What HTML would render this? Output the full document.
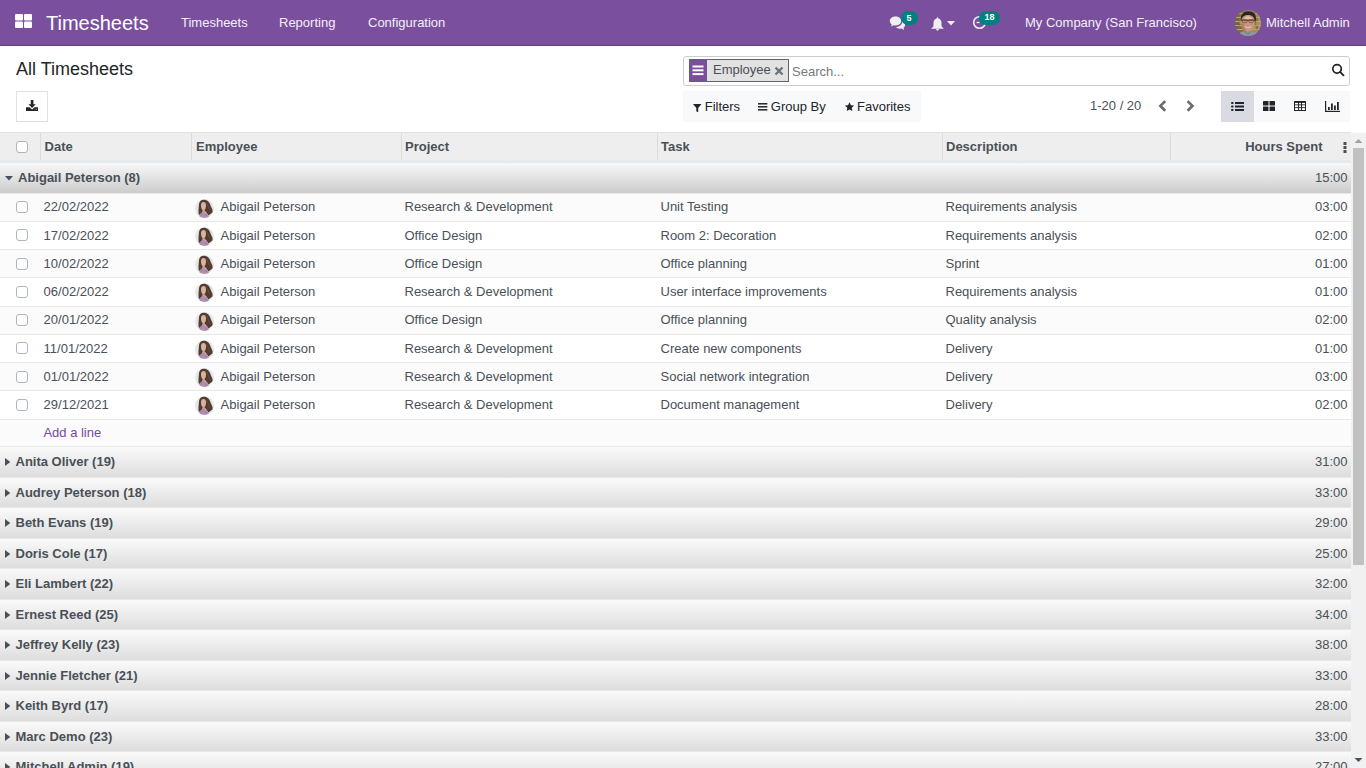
<!DOCTYPE html>
<html><head><meta charset="utf-8">
<style>
*{box-sizing:border-box;margin:0;padding:0}
html,body{width:1366px;height:768px;overflow:hidden;background:#fff}
body{font-family:"Liberation Sans",sans-serif;font-size:13px;color:#495057;position:relative}
.a{position:absolute;white-space:nowrap}
.nav{position:absolute;left:0;top:0;width:1366px;height:46px;background:#7a4f9d;border-bottom:1px solid #62417f}
.nav .a{color:#fff}
.nt{color:#f4f0f8 !important}
.badge{position:absolute;background:#01807f;color:#fff;border-radius:7px;font-size:9px;font-weight:bold;line-height:12.6px;height:14px;text-align:center}
.hdr{position:absolute;left:0;top:132px;width:1351px;height:30px;background:#eeeeee;border-top:1px solid #dee2e6;border-bottom:2px solid #e6e9ed}
.sep{position:absolute;top:0;width:1px;height:27px;background:#dcdcdc}
.b{font-weight:bold}
.grp{position:absolute;left:0;width:1351px;background-image:linear-gradient(#fafafa,#dddddd)}
.grp.open{background-image:linear-gradient(#f8f8f8,#cccccc)}
.bl{position:absolute;left:0;width:1351px;height:1px;background:#e6e9ec}
.rw{position:absolute;left:0;width:1351px;background:#fff}
.rw.odd{background:#fbfbfb}
.cb{position:absolute;width:12px;height:12px;border:1px solid #adb5bd;border-radius:3px;background:#fff}
.sb{position:absolute;left:1351px;top:133px;width:15px;height:635px;background:#f1f1f1}
</style></head>
<body>

<div class="nav">
<svg class="a" style="left:15px;top:14px" width="17" height="14" viewBox="0 0 17 14"><rect x="0" y="0" width="8" height="6.5" rx="1" fill="#fff"/><rect x="9" y="0" width="8" height="6.5" rx="1" fill="#fff"/><rect x="0" y="7.5" width="8" height="6.5" rx="1" fill="#fff"/><rect x="9" y="7.5" width="8" height="6.5" rx="1" fill="#fff"/></svg>
<div class="a " style="left:46px;top:13px;font-size:20px;line-height:20px;">Timesheets</div>
<div class="a nt" style="left:181px;top:16px;font-size:13px;line-height:13px;">Timesheets</div>
<div class="a nt" style="left:279px;top:16px;font-size:13px;line-height:13px;">Reporting</div>
<div class="a nt" style="left:368px;top:16px;font-size:13px;line-height:13px;">Configuration</div>
<svg class="a" style="left:889px;top:16px" width="17" height="14" viewBox="0 0 17 14"><path d="M6.5 0.6C3.2 0.6 0.8 2.5 0.8 5c0 1.3.7 2.5 1.9 3.3L2.1 10.6 4.6 9.2c.6.2 1.2.2 1.9.2 3.3 0 5.7-1.9 5.7-4.4S9.8.6 6.5.6z" fill="#f1edf5"/><path d="M13 5.2c.1.3.1.6.1.9 0 2.9-2.8 4.9-6.3 5 .9 1 2.5 1.7 4.3 1.7.5 0 1-.1 1.5-.2l2.6 1.3-.7-2.2c1-.7 1.6-1.7 1.6-2.8 0-1.5-1.2-2.9-3.1-3.7z" fill="#f1edf5"/></svg>
<div class="badge" style="left:901px;top:11px;width:17px;line-height:14px;padding-right:1px">5</div>
<svg class="a" style="left:931px;top:16.5px" width="13" height="14" viewBox="0 0 13 14"><path d="M6.5 0.3c-.5 0-.8.3-.8.8v.4C3.7 1.9 2.5 3.6 2.5 5.8v2.6c0 1-.9 2.1-2.2 2.9v.5h12.4v-.5c-1.3-.8-2.2-1.9-2.2-2.9V5.8c0-2.2-1.2-3.9-3.2-4.3v-.4c0-.5-.3-.8-.8-.8z" fill="#f1edf5"/><path d="M5 12.1c0 .9.7 1.5 1.5 1.5S8 13 8 12.1z" fill="#f1edf5"/></svg>
<svg class="a" style="left:947px;top:21px" width="8" height="5" viewBox="0 0 8 5"><path d="M0 0h8L4 4.5z" fill="#f1edf5"/></svg>
<svg class="a" style="left:972px;top:15px" width="15" height="15" viewBox="0 0 15 15"><circle cx="7.5" cy="7.5" r="5.8" fill="none" stroke="#f1edf5" stroke-width="1.6"/><path d="M7.5 7.5H4.5" stroke="#f1edf5" stroke-width="1.3"/></svg>
<div class="badge" style="left:979px;top:11px;width:21px">18</div>
<div class="a nt" style="left:1025px;top:16px;font-size:13px;line-height:13px;">My Company (San Francisco)</div>
<svg class="a" style="left:1235px;top:10px" width="26" height="26" viewBox="0 0 26 26"><defs><clipPath id="ua"><circle cx="13" cy="13" r="13"/></clipPath><filter id="fu" x="-10%" y="-10%" width="120%" height="120%"><feGaussianBlur stdDeviation="0.55"/></filter><linearGradient id="wall" x1="0" y1="0" x2="1" y2="0"><stop offset="0" stop-color="#6e5f38"/><stop offset=".5" stop-color="#9a8652"/><stop offset="1" stop-color="#a8935c"/></linearGradient></defs><g clip-path="url(#ua)"><rect width="26" height="26" fill="url(#wall)"/><g filter="url(#fu)"><path d="M0 3.5h26M0 7.5h26M0 11.5h26M0 15.5h26M0 19.5h26M0 23.5h26" stroke="#c2ad72" stroke-width=".9"/><path d="M4 0v3.5M12 3.5v4M20 0v3.5M8 7.5v4M22 7.5v4M4 11.5v4M20 11.5v4M8 15.5v4M22 15.5v4" stroke="#5e502c" stroke-width=".8"/><path d="M5.8 10C5.6 4.2 8.5 1.2 13.5 1.2S21.2 4 21 9.5L20 12.5 6.5 12.5z" fill="#2f2620"/><path d="M6.2 12C6.2 7.5 8.8 5 13 5S19.8 7.5 19.8 12C19.8 18 17 22 13 22S6.2 18 6.2 12z" fill="#c9957a"/><path d="M8.5 9.5C9.5 7 11.5 6.2 13.5 6.4S17 7.6 17.5 9.5" fill="#e2c0ac"/><path d="M6.2 12C6.2 17 8 21 11 21.8L9 14z" fill="#a9735b" opacity=".6"/><ellipse cx="5.6" cy="12.5" rx="1.2" ry="2" fill="#c48a6c"/><path d="M6 10.2h14.5" stroke="#333" stroke-width=".9"/><rect x="7.6" y="9.6" width="4.6" height="3" rx="1" fill="none" stroke="#3a3a3a" stroke-width=".5"/><rect x="13.8" y="9.6" width="4.6" height="3" rx="1" fill="none" stroke="#3a3a3a" stroke-width=".5"/><path d="M9.8 16.5q3.2 2.4 6.4 0" stroke="#e0c4b8" stroke-width="1.1" fill="none"/><path d="M2.5 27C3.2 22.8 6.5 21.2 12.8 21.2S22 22.8 23 27z" fill="#8d9a9e"/><path d="M10 21.5l2.8 3 2.8-3" stroke="#5d6a6e" stroke-width=".8" fill="none"/></g></g></svg>
<div class="a nt" style="left:1266px;top:16px;font-size:13px;line-height:13px;">Mitchell Admin</div>
</div>
<div class="a " style="left:16px;top:60px;font-size:18px;line-height:18px;color:#212529">All Timesheets</div>
<div class="a" style="left:16px;top:91px;width:32px;height:31px;border:1px solid #dee2e6;background:#fff"></div>
<svg class="a" style="left:26px;top:100px" width="12" height="12" viewBox="0 0 12 12"><path d="M4.8 0h2.6v4.3h2.3L6.1 8 2.5 4.3h2.3z" fill="#212529"/><path d="M0 7.2h3.7L6.1 9.4 8.5 7.2H12V11H0z" fill="#212529"/><rect x="8.6" y="8.8" width="1" height="1" fill="#6c8fb0"/><rect x="10" y="8.8" width="1" height="1" fill="#6c8fb0"/></svg>
<div class="a" style="left:683px;top:56px;width:667px;height:30px;border:1px solid #cdcdcd;border-radius:3px;background:#fff"></div>
<div class="a" style="left:689px;top:59px;width:100px;height:23px;border:1px solid #5e656b;background:#e2e2e2"></div>
<div class="a" style="left:690px;top:60px;width:17px;height:21px;background:#7a4f9d"></div>
<svg class="a" style="left:692px;top:65px" width="12" height="11" viewBox="0 0 12 11"><rect x="0.5" y="0.5" width="11" height="2" fill="#fff"/><rect x="0.5" y="4.3" width="11" height="2" fill="#fff"/><rect x="0.5" y="8.1" width="11" height="2" fill="#fff"/></svg>
<div class="a " style="left:713px;top:63px;font-size:13px;line-height:13px;color:#495057">Employee</div>
<svg class="a" style="left:774px;top:66px" width="10" height="10" viewBox="0 0 10 10"><path d="M1.5 1.5l7 7M8.5 1.5l-7 7" stroke="#6c757d" stroke-width="2.4" stroke-linecap="butt"/></svg>
<div class="a " style="left:792px;top:65px;font-size:13px;line-height:13px;color:#737a80">Search...</div>
<svg class="a" style="left:1331px;top:63px" width="14" height="14" viewBox="0 0 14 14"><circle cx="6.05" cy="5.8" r="4.25" fill="none" stroke="#212529" stroke-width="1.7"/><path d="M9.1 8.9l3.4 3.4" stroke="#212529" stroke-width="1.9" stroke-linecap="round"/></svg>
<div class="a" style="left:683px;top:91px;width:238px;height:31px;background:#f8f9fa"></div>
<svg class="a" style="left:693px;top:103.5px" width="8.5" height="8.5" viewBox="0 0 9 9"><path d="M0 0h9L5.5 4.2V9L3.5 7.6V4.2z" fill="#212529"/></svg>
<div class="a " style="left:704.7px;top:100px;font-size:13px;line-height:13px;color:#212529">Filters</div>
<svg class="a" style="left:758.3px;top:103.4px" width="9.4" height="7.6" viewBox="0 0 10 8"><rect y="0" width="10" height="1.6" fill="#212529"/><rect y="3.2" width="10" height="1.6" fill="#212529"/><rect y="6.4" width="10" height="1.6" fill="#212529"/></svg>
<div class="a " style="left:770.8px;top:100px;font-size:13px;line-height:13px;color:#212529">Group By</div>
<svg class="a" style="left:843.5px;top:102px" width="11" height="10" viewBox="-.5 0 11 10.4"><path d="M5 0.3l1.45 3.05 3.3.4-2.45 2.3.65 3.3L5 7.7 2.05 9.35l.65-3.3L.25 3.75l3.3-.4z" fill="#212529"/></svg>
<div class="a " style="left:857px;top:100px;font-size:13px;line-height:13px;color:#212529">Favorites</div>
<div class="a " style="left:1090px;top:99px;font-size:13px;line-height:13px;color:#495057">1-20 / 20</div>
<svg class="a" style="left:1158px;top:100px" width="9" height="12" viewBox="0 0 9 12"><path d="M7.2 1.1L2.4 5.9 7.2 10.7" stroke="#686c70" stroke-width="2.7" fill="none"/></svg>
<svg class="a" style="left:1186px;top:100px" width="9" height="12" viewBox="0 0 9 12"><path d="M1.6 1.1L6.4 5.9 1.6 10.7" stroke="#686c70" stroke-width="2.7" fill="none"/></svg>
<div class="a" style="left:1221px;top:91px;width:129px;height:31px;background:#f8f9fa"></div>
<div class="a" style="left:1221px;top:91px;width:33px;height:31px;background:#d8dce2"></div>
<svg class="a" style="left:1230px;top:101px" width="15" height="11" viewBox="0 0 15 11"><g fill="#212529"><rect x="1" y="1" width="2.6" height="2" rx="1"/><rect x="1" y="4.5" width="2.6" height="2" rx="1"/><rect x="1" y="8" width="2.6" height="2" rx="1"/><rect x="5" y="1" width="9" height="2"/><rect x="5" y="4.5" width="9" height="2"/><rect x="5" y="8" width="9" height="2"/></g></svg>
<svg class="a" style="left:1263px;top:101px" width="12" height="10" viewBox="0 0 12 10"><g fill="#212529"><rect x="0" y="0" width="5.5" height="4.5" rx=".6"/><rect x="6.5" y="0" width="5.5" height="4.5" rx=".6"/><rect x="0" y="5.5" width="5.5" height="4.5" rx=".6"/><rect x="6.5" y="5.5" width="5.5" height="4.5" rx=".6"/></g></svg>
<svg class="a" style="left:1294px;top:101px" width="12" height="10" viewBox="0 0 12 10"><rect width="12" height="10" rx=".5" fill="#212529"/><g fill="#fff"><rect x="1" y="1.9" width="3.1" height="1.5"/><rect x="5.1" y="1.9" width="1.9" height="1.5"/><rect x="8" y="1.9" width="3" height="1.5"/><rect x="1" y="4.3" width="3.1" height="1.9"/><rect x="5.1" y="4.3" width="1.9" height="1.9"/><rect x="8" y="4.3" width="3" height="1.9"/><rect x="1" y="7.1" width="3.1" height="1.9"/><rect x="5.1" y="7.1" width="1.9" height="1.9"/><rect x="8" y="7.1" width="3" height="1.9"/></g></svg>
<svg class="a" style="left:1325px;top:101px" width="15" height="11" viewBox="0 0 15 11"><g fill="#212529"><rect x="0" y="0" width="1.2" height="11"/><rect x="0" y="9.8" width="15" height="1.2"/><rect x="3" y="6" width="1.8" height="3"/><rect x="6" y="2.5" width="1.8" height="6.5"/><rect x="9" y="4.5" width="1.8" height="4.5"/><rect x="12" y="1" width="1.8" height="8"/></g></svg>
<div class="hdr">
<div class="cb" style="left:16px;top:8px"></div>
<div class="sep" style="left:40px"></div>
<div class="sep" style="left:191px"></div>
<div class="sep" style="left:401px"></div>
<div class="sep" style="left:657px"></div>
<div class="sep" style="left:942px"></div>
<div class="sep" style="left:1170px"></div>
</div>
<div class="a " style="left:44.6px;top:140px;font-size:13px;line-height:13px;font-weight:bold">Date</div>
<div class="a " style="left:196px;top:140px;font-size:13px;line-height:13px;font-weight:bold">Employee</div>
<div class="a " style="left:405px;top:140px;font-size:13px;line-height:13px;font-weight:bold">Project</div>
<div class="a " style="left:661px;top:140px;font-size:13px;line-height:13px;font-weight:bold">Task</div>
<div class="a " style="left:946px;top:140px;font-size:13px;line-height:13px;font-weight:bold">Description</div>
<div class="a" style="right:43.5px;top:140px;font-size:13px;line-height:13px;font-weight:bold">Hours Spent</div>
<svg class="a" style="left:1342.5px;top:141.5px" width="4" height="11" viewBox="0 0 4 11"><g fill="#495057"><rect x=".5" y="0" width="3" height="3"/><rect x=".5" y="4" width="3" height="3"/><rect x=".5" y="8" width="3" height="3"/></g></svg>
<div class="bl" style="top:162px"></div>
<div class="grp open" style="top:163px;height:30px"></div>
<svg class="a" style="left:5px;top:175.5px" width="8" height="5" viewBox="0 0 8 5"><path d="M0 0h8L4 4.6z" fill="#495057"/></svg>
<div class="a " style="left:18px;top:171px;font-size:13px;line-height:13px;font-weight:bold">Abigail Peterson (8)</div>
<div class="a" style="right:18.5px;top:171px;font-size:13px;line-height:13px;">15:00</div>
<div class="bl" style="top:193px"></div>
<div class="rw odd" style="top:194px;height:27px"></div>
<div class="cb" style="left:16px;top:201px"></div>
<div class="a " style="left:43.6px;top:200px;font-size:13px;line-height:13px;">22/02/2022</div>
<div class="a" style="left:195px;top:199px"><svg width="19" height="19" viewBox="0 0 19 19"><defs><clipPath id="cw0"><circle cx="9.5" cy="9.5" r="9.5"/></clipPath><filter id="fw0" x="-10%" y="-10%" width="120%" height="120%"><feGaussianBlur stdDeviation="0.45"/></filter></defs><g clip-path="url(#cw0)"><rect width="19" height="19" fill="#e4e8eb"/><g filter="url(#fw0)"><path d="M8.8 0.8C5.6 0.8 4.2 3 3.9 6.2 3.6 9.6 3.2 12.5 3.8 15.5L7 16.5 7.4 12.4 10.6 12.5 13.5 16.6 17.4 13.4C18.2 11.5 17 9.6 15.8 7.2 14.7 3.3 12.6 0.8 8.8 0.8z" fill="#523a2f"/><path d="M11 3.5C12.5 5 13.2 8 14.8 11.5" stroke="#6e5244" stroke-width=".8" fill="none"/><path d="M6 6.2C6 4 7 3 8.5 3S11 4.2 11 6.4C11 9.2 10 11.2 8.5 11.2S6 9.2 6 6.2z" fill="#d9b3a2"/><path d="M7.5 11h2.2v2.5H7.5z" fill="#cfa592"/><path d="M4 19.5C4.4 15.6 5.6 13.2 8.6 13S13.4 15 14.2 19.5z" fill="#b48ca8"/><circle cx="6.6" cy="15.6" r=".8" fill="#8d8cc0"/><circle cx="11.1" cy="16.4" r=".9" fill="#8189c4"/><circle cx="8.8" cy="17.6" r=".7" fill="#d58ea0"/></g></g></svg></div>
<div class="a " style="left:220.6px;top:200px;font-size:13px;line-height:13px;">Abigail Peterson</div>
<div class="a " style="left:404.5px;top:200px;font-size:13px;line-height:13px;">Research &amp; Development</div>
<div class="a " style="left:660.5px;top:200px;font-size:13px;line-height:13px;">Unit Testing</div>
<div class="a " style="left:945.5px;top:200px;font-size:13px;line-height:13px;">Requirements analysis</div>
<div class="a" style="right:18.5px;top:200px;font-size:13px;line-height:13px;">03:00</div>
<div class="bl" style="top:221px"></div>
<div class="rw" style="top:222px;height:27px"></div>
<div class="cb" style="left:16px;top:229px"></div>
<div class="a " style="left:43.6px;top:229px;font-size:13px;line-height:13px;">17/02/2022</div>
<div class="a" style="left:195px;top:227px"><svg width="19" height="19" viewBox="0 0 19 19"><defs><clipPath id="cw1"><circle cx="9.5" cy="9.5" r="9.5"/></clipPath><filter id="fw1" x="-10%" y="-10%" width="120%" height="120%"><feGaussianBlur stdDeviation="0.45"/></filter></defs><g clip-path="url(#cw1)"><rect width="19" height="19" fill="#e4e8eb"/><g filter="url(#fw1)"><path d="M8.8 0.8C5.6 0.8 4.2 3 3.9 6.2 3.6 9.6 3.2 12.5 3.8 15.5L7 16.5 7.4 12.4 10.6 12.5 13.5 16.6 17.4 13.4C18.2 11.5 17 9.6 15.8 7.2 14.7 3.3 12.6 0.8 8.8 0.8z" fill="#523a2f"/><path d="M11 3.5C12.5 5 13.2 8 14.8 11.5" stroke="#6e5244" stroke-width=".8" fill="none"/><path d="M6 6.2C6 4 7 3 8.5 3S11 4.2 11 6.4C11 9.2 10 11.2 8.5 11.2S6 9.2 6 6.2z" fill="#d9b3a2"/><path d="M7.5 11h2.2v2.5H7.5z" fill="#cfa592"/><path d="M4 19.5C4.4 15.6 5.6 13.2 8.6 13S13.4 15 14.2 19.5z" fill="#b48ca8"/><circle cx="6.6" cy="15.6" r=".8" fill="#8d8cc0"/><circle cx="11.1" cy="16.4" r=".9" fill="#8189c4"/><circle cx="8.8" cy="17.6" r=".7" fill="#d58ea0"/></g></g></svg></div>
<div class="a " style="left:220.6px;top:229px;font-size:13px;line-height:13px;">Abigail Peterson</div>
<div class="a " style="left:404.5px;top:229px;font-size:13px;line-height:13px;">Office Design</div>
<div class="a " style="left:660.5px;top:229px;font-size:13px;line-height:13px;">Room 2: Decoration</div>
<div class="a " style="left:945.5px;top:229px;font-size:13px;line-height:13px;">Requirements analysis</div>
<div class="a" style="right:18.5px;top:229px;font-size:13px;line-height:13px;">02:00</div>
<div class="bl" style="top:249px"></div>
<div class="rw odd" style="top:250px;height:27px"></div>
<div class="cb" style="left:16px;top:258px"></div>
<div class="a " style="left:43.6px;top:257px;font-size:13px;line-height:13px;">10/02/2022</div>
<div class="a" style="left:195px;top:255px"><svg width="19" height="19" viewBox="0 0 19 19"><defs><clipPath id="cw2"><circle cx="9.5" cy="9.5" r="9.5"/></clipPath><filter id="fw2" x="-10%" y="-10%" width="120%" height="120%"><feGaussianBlur stdDeviation="0.45"/></filter></defs><g clip-path="url(#cw2)"><rect width="19" height="19" fill="#e4e8eb"/><g filter="url(#fw2)"><path d="M8.8 0.8C5.6 0.8 4.2 3 3.9 6.2 3.6 9.6 3.2 12.5 3.8 15.5L7 16.5 7.4 12.4 10.6 12.5 13.5 16.6 17.4 13.4C18.2 11.5 17 9.6 15.8 7.2 14.7 3.3 12.6 0.8 8.8 0.8z" fill="#523a2f"/><path d="M11 3.5C12.5 5 13.2 8 14.8 11.5" stroke="#6e5244" stroke-width=".8" fill="none"/><path d="M6 6.2C6 4 7 3 8.5 3S11 4.2 11 6.4C11 9.2 10 11.2 8.5 11.2S6 9.2 6 6.2z" fill="#d9b3a2"/><path d="M7.5 11h2.2v2.5H7.5z" fill="#cfa592"/><path d="M4 19.5C4.4 15.6 5.6 13.2 8.6 13S13.4 15 14.2 19.5z" fill="#b48ca8"/><circle cx="6.6" cy="15.6" r=".8" fill="#8d8cc0"/><circle cx="11.1" cy="16.4" r=".9" fill="#8189c4"/><circle cx="8.8" cy="17.6" r=".7" fill="#d58ea0"/></g></g></svg></div>
<div class="a " style="left:220.6px;top:257px;font-size:13px;line-height:13px;">Abigail Peterson</div>
<div class="a " style="left:404.5px;top:257px;font-size:13px;line-height:13px;">Office Design</div>
<div class="a " style="left:660.5px;top:257px;font-size:13px;line-height:13px;">Office planning</div>
<div class="a " style="left:945.5px;top:257px;font-size:13px;line-height:13px;">Sprint</div>
<div class="a" style="right:18.5px;top:257px;font-size:13px;line-height:13px;">01:00</div>
<div class="bl" style="top:277px"></div>
<div class="rw" style="top:278px;height:28px"></div>
<div class="cb" style="left:16px;top:286px"></div>
<div class="a " style="left:43.6px;top:285px;font-size:13px;line-height:13px;">06/02/2022</div>
<div class="a" style="left:195px;top:283px"><svg width="19" height="19" viewBox="0 0 19 19"><defs><clipPath id="cw3"><circle cx="9.5" cy="9.5" r="9.5"/></clipPath><filter id="fw3" x="-10%" y="-10%" width="120%" height="120%"><feGaussianBlur stdDeviation="0.45"/></filter></defs><g clip-path="url(#cw3)"><rect width="19" height="19" fill="#e4e8eb"/><g filter="url(#fw3)"><path d="M8.8 0.8C5.6 0.8 4.2 3 3.9 6.2 3.6 9.6 3.2 12.5 3.8 15.5L7 16.5 7.4 12.4 10.6 12.5 13.5 16.6 17.4 13.4C18.2 11.5 17 9.6 15.8 7.2 14.7 3.3 12.6 0.8 8.8 0.8z" fill="#523a2f"/><path d="M11 3.5C12.5 5 13.2 8 14.8 11.5" stroke="#6e5244" stroke-width=".8" fill="none"/><path d="M6 6.2C6 4 7 3 8.5 3S11 4.2 11 6.4C11 9.2 10 11.2 8.5 11.2S6 9.2 6 6.2z" fill="#d9b3a2"/><path d="M7.5 11h2.2v2.5H7.5z" fill="#cfa592"/><path d="M4 19.5C4.4 15.6 5.6 13.2 8.6 13S13.4 15 14.2 19.5z" fill="#b48ca8"/><circle cx="6.6" cy="15.6" r=".8" fill="#8d8cc0"/><circle cx="11.1" cy="16.4" r=".9" fill="#8189c4"/><circle cx="8.8" cy="17.6" r=".7" fill="#d58ea0"/></g></g></svg></div>
<div class="a " style="left:220.6px;top:285px;font-size:13px;line-height:13px;">Abigail Peterson</div>
<div class="a " style="left:404.5px;top:285px;font-size:13px;line-height:13px;">Research &amp; Development</div>
<div class="a " style="left:660.5px;top:285px;font-size:13px;line-height:13px;">User interface improvements</div>
<div class="a " style="left:945.5px;top:285px;font-size:13px;line-height:13px;">Requirements analysis</div>
<div class="a" style="right:18.5px;top:285px;font-size:13px;line-height:13px;">01:00</div>
<div class="bl" style="top:306px"></div>
<div class="rw odd" style="top:307px;height:27px"></div>
<div class="cb" style="left:16px;top:314px"></div>
<div class="a " style="left:43.6px;top:313px;font-size:13px;line-height:13px;">20/01/2022</div>
<div class="a" style="left:195px;top:312px"><svg width="19" height="19" viewBox="0 0 19 19"><defs><clipPath id="cw4"><circle cx="9.5" cy="9.5" r="9.5"/></clipPath><filter id="fw4" x="-10%" y="-10%" width="120%" height="120%"><feGaussianBlur stdDeviation="0.45"/></filter></defs><g clip-path="url(#cw4)"><rect width="19" height="19" fill="#e4e8eb"/><g filter="url(#fw4)"><path d="M8.8 0.8C5.6 0.8 4.2 3 3.9 6.2 3.6 9.6 3.2 12.5 3.8 15.5L7 16.5 7.4 12.4 10.6 12.5 13.5 16.6 17.4 13.4C18.2 11.5 17 9.6 15.8 7.2 14.7 3.3 12.6 0.8 8.8 0.8z" fill="#523a2f"/><path d="M11 3.5C12.5 5 13.2 8 14.8 11.5" stroke="#6e5244" stroke-width=".8" fill="none"/><path d="M6 6.2C6 4 7 3 8.5 3S11 4.2 11 6.4C11 9.2 10 11.2 8.5 11.2S6 9.2 6 6.2z" fill="#d9b3a2"/><path d="M7.5 11h2.2v2.5H7.5z" fill="#cfa592"/><path d="M4 19.5C4.4 15.6 5.6 13.2 8.6 13S13.4 15 14.2 19.5z" fill="#b48ca8"/><circle cx="6.6" cy="15.6" r=".8" fill="#8d8cc0"/><circle cx="11.1" cy="16.4" r=".9" fill="#8189c4"/><circle cx="8.8" cy="17.6" r=".7" fill="#d58ea0"/></g></g></svg></div>
<div class="a " style="left:220.6px;top:313px;font-size:13px;line-height:13px;">Abigail Peterson</div>
<div class="a " style="left:404.5px;top:313px;font-size:13px;line-height:13px;">Office Design</div>
<div class="a " style="left:660.5px;top:313px;font-size:13px;line-height:13px;">Office planning</div>
<div class="a " style="left:945.5px;top:313px;font-size:13px;line-height:13px;">Quality analysis</div>
<div class="a" style="right:18.5px;top:313px;font-size:13px;line-height:13px;">02:00</div>
<div class="bl" style="top:334px"></div>
<div class="rw" style="top:335px;height:27px"></div>
<div class="cb" style="left:16px;top:342px"></div>
<div class="a " style="left:43.6px;top:342px;font-size:13px;line-height:13px;">11/01/2022</div>
<div class="a" style="left:195px;top:340px"><svg width="19" height="19" viewBox="0 0 19 19"><defs><clipPath id="cw5"><circle cx="9.5" cy="9.5" r="9.5"/></clipPath><filter id="fw5" x="-10%" y="-10%" width="120%" height="120%"><feGaussianBlur stdDeviation="0.45"/></filter></defs><g clip-path="url(#cw5)"><rect width="19" height="19" fill="#e4e8eb"/><g filter="url(#fw5)"><path d="M8.8 0.8C5.6 0.8 4.2 3 3.9 6.2 3.6 9.6 3.2 12.5 3.8 15.5L7 16.5 7.4 12.4 10.6 12.5 13.5 16.6 17.4 13.4C18.2 11.5 17 9.6 15.8 7.2 14.7 3.3 12.6 0.8 8.8 0.8z" fill="#523a2f"/><path d="M11 3.5C12.5 5 13.2 8 14.8 11.5" stroke="#6e5244" stroke-width=".8" fill="none"/><path d="M6 6.2C6 4 7 3 8.5 3S11 4.2 11 6.4C11 9.2 10 11.2 8.5 11.2S6 9.2 6 6.2z" fill="#d9b3a2"/><path d="M7.5 11h2.2v2.5H7.5z" fill="#cfa592"/><path d="M4 19.5C4.4 15.6 5.6 13.2 8.6 13S13.4 15 14.2 19.5z" fill="#b48ca8"/><circle cx="6.6" cy="15.6" r=".8" fill="#8d8cc0"/><circle cx="11.1" cy="16.4" r=".9" fill="#8189c4"/><circle cx="8.8" cy="17.6" r=".7" fill="#d58ea0"/></g></g></svg></div>
<div class="a " style="left:220.6px;top:342px;font-size:13px;line-height:13px;">Abigail Peterson</div>
<div class="a " style="left:404.5px;top:342px;font-size:13px;line-height:13px;">Research &amp; Development</div>
<div class="a " style="left:660.5px;top:342px;font-size:13px;line-height:13px;">Create new components</div>
<div class="a " style="left:945.5px;top:342px;font-size:13px;line-height:13px;">Delivery</div>
<div class="a" style="right:18.5px;top:342px;font-size:13px;line-height:13px;">01:00</div>
<div class="bl" style="top:362px"></div>
<div class="rw odd" style="top:363px;height:27px"></div>
<div class="cb" style="left:16px;top:371px"></div>
<div class="a " style="left:43.6px;top:370px;font-size:13px;line-height:13px;">01/01/2022</div>
<div class="a" style="left:195px;top:368px"><svg width="19" height="19" viewBox="0 0 19 19"><defs><clipPath id="cw6"><circle cx="9.5" cy="9.5" r="9.5"/></clipPath><filter id="fw6" x="-10%" y="-10%" width="120%" height="120%"><feGaussianBlur stdDeviation="0.45"/></filter></defs><g clip-path="url(#cw6)"><rect width="19" height="19" fill="#e4e8eb"/><g filter="url(#fw6)"><path d="M8.8 0.8C5.6 0.8 4.2 3 3.9 6.2 3.6 9.6 3.2 12.5 3.8 15.5L7 16.5 7.4 12.4 10.6 12.5 13.5 16.6 17.4 13.4C18.2 11.5 17 9.6 15.8 7.2 14.7 3.3 12.6 0.8 8.8 0.8z" fill="#523a2f"/><path d="M11 3.5C12.5 5 13.2 8 14.8 11.5" stroke="#6e5244" stroke-width=".8" fill="none"/><path d="M6 6.2C6 4 7 3 8.5 3S11 4.2 11 6.4C11 9.2 10 11.2 8.5 11.2S6 9.2 6 6.2z" fill="#d9b3a2"/><path d="M7.5 11h2.2v2.5H7.5z" fill="#cfa592"/><path d="M4 19.5C4.4 15.6 5.6 13.2 8.6 13S13.4 15 14.2 19.5z" fill="#b48ca8"/><circle cx="6.6" cy="15.6" r=".8" fill="#8d8cc0"/><circle cx="11.1" cy="16.4" r=".9" fill="#8189c4"/><circle cx="8.8" cy="17.6" r=".7" fill="#d58ea0"/></g></g></svg></div>
<div class="a " style="left:220.6px;top:370px;font-size:13px;line-height:13px;">Abigail Peterson</div>
<div class="a " style="left:404.5px;top:370px;font-size:13px;line-height:13px;">Research &amp; Development</div>
<div class="a " style="left:660.5px;top:370px;font-size:13px;line-height:13px;">Social network integration</div>
<div class="a " style="left:945.5px;top:370px;font-size:13px;line-height:13px;">Delivery</div>
<div class="a" style="right:18.5px;top:370px;font-size:13px;line-height:13px;">03:00</div>
<div class="bl" style="top:390px"></div>
<div class="rw" style="top:391px;height:28px"></div>
<div class="cb" style="left:16px;top:399px"></div>
<div class="a " style="left:43.6px;top:398px;font-size:13px;line-height:13px;">29/12/2021</div>
<div class="a" style="left:195px;top:396px"><svg width="19" height="19" viewBox="0 0 19 19"><defs><clipPath id="cw7"><circle cx="9.5" cy="9.5" r="9.5"/></clipPath><filter id="fw7" x="-10%" y="-10%" width="120%" height="120%"><feGaussianBlur stdDeviation="0.45"/></filter></defs><g clip-path="url(#cw7)"><rect width="19" height="19" fill="#e4e8eb"/><g filter="url(#fw7)"><path d="M8.8 0.8C5.6 0.8 4.2 3 3.9 6.2 3.6 9.6 3.2 12.5 3.8 15.5L7 16.5 7.4 12.4 10.6 12.5 13.5 16.6 17.4 13.4C18.2 11.5 17 9.6 15.8 7.2 14.7 3.3 12.6 0.8 8.8 0.8z" fill="#523a2f"/><path d="M11 3.5C12.5 5 13.2 8 14.8 11.5" stroke="#6e5244" stroke-width=".8" fill="none"/><path d="M6 6.2C6 4 7 3 8.5 3S11 4.2 11 6.4C11 9.2 10 11.2 8.5 11.2S6 9.2 6 6.2z" fill="#d9b3a2"/><path d="M7.5 11h2.2v2.5H7.5z" fill="#cfa592"/><path d="M4 19.5C4.4 15.6 5.6 13.2 8.6 13S13.4 15 14.2 19.5z" fill="#b48ca8"/><circle cx="6.6" cy="15.6" r=".8" fill="#8d8cc0"/><circle cx="11.1" cy="16.4" r=".9" fill="#8189c4"/><circle cx="8.8" cy="17.6" r=".7" fill="#d58ea0"/></g></g></svg></div>
<div class="a " style="left:220.6px;top:398px;font-size:13px;line-height:13px;">Abigail Peterson</div>
<div class="a " style="left:404.5px;top:398px;font-size:13px;line-height:13px;">Research &amp; Development</div>
<div class="a " style="left:660.5px;top:398px;font-size:13px;line-height:13px;">Document management</div>
<div class="a " style="left:945.5px;top:398px;font-size:13px;line-height:13px;">Delivery</div>
<div class="a" style="right:18.5px;top:398px;font-size:13px;line-height:13px;">02:00</div>
<div class="bl" style="top:419px"></div>
<div class="rw odd" style="top:420px;height:26px"></div>
<div class="a " style="left:43.4px;top:426px;font-size:13px;line-height:13px;color:#7649a0">Add a line</div>
<div class="bl" style="top:446px"></div>
<div class="grp" style="top:447px;height:30px"></div>
<svg class="a" style="left:5px;top:457.5px" width="6" height="8" viewBox="0 0 6 8"><path d="M0 0v8L5.3 4z" fill="#495057"/></svg>
<div class="a " style="left:15.5px;top:455px;font-size:13px;line-height:13px;font-weight:bold">Anita Oliver (19)</div>
<div class="a" style="right:18.5px;top:455px;font-size:13px;line-height:13px;">31:00</div>
<div class="bl" style="top:477px"></div>
<div class="grp" style="top:478px;height:29px"></div>
<svg class="a" style="left:5px;top:488.5px" width="6" height="8" viewBox="0 0 6 8"><path d="M0 0v8L5.3 4z" fill="#495057"/></svg>
<div class="a " style="left:15.5px;top:486px;font-size:13px;line-height:13px;font-weight:bold">Audrey Peterson (18)</div>
<div class="a" style="right:18.5px;top:486px;font-size:13px;line-height:13px;">33:00</div>
<div class="bl" style="top:507px"></div>
<div class="grp" style="top:508px;height:30px"></div>
<svg class="a" style="left:5px;top:518.5px" width="6" height="8" viewBox="0 0 6 8"><path d="M0 0v8L5.3 4z" fill="#495057"/></svg>
<div class="a " style="left:15.5px;top:516px;font-size:13px;line-height:13px;font-weight:bold">Beth Evans (19)</div>
<div class="a" style="right:18.5px;top:516px;font-size:13px;line-height:13px;">29:00</div>
<div class="bl" style="top:538px"></div>
<div class="grp" style="top:539px;height:29px"></div>
<svg class="a" style="left:5px;top:549.5px" width="6" height="8" viewBox="0 0 6 8"><path d="M0 0v8L5.3 4z" fill="#495057"/></svg>
<div class="a " style="left:15.5px;top:547px;font-size:13px;line-height:13px;font-weight:bold">Doris Cole (17)</div>
<div class="a" style="right:18.5px;top:547px;font-size:13px;line-height:13px;">25:00</div>
<div class="bl" style="top:568px"></div>
<div class="grp" style="top:569px;height:30px"></div>
<svg class="a" style="left:5px;top:579.5px" width="6" height="8" viewBox="0 0 6 8"><path d="M0 0v8L5.3 4z" fill="#495057"/></svg>
<div class="a " style="left:15.5px;top:577px;font-size:13px;line-height:13px;font-weight:bold">Eli Lambert (22)</div>
<div class="a" style="right:18.5px;top:577px;font-size:13px;line-height:13px;">32:00</div>
<div class="bl" style="top:599px"></div>
<div class="grp" style="top:600px;height:29px"></div>
<svg class="a" style="left:5px;top:610.5px" width="6" height="8" viewBox="0 0 6 8"><path d="M0 0v8L5.3 4z" fill="#495057"/></svg>
<div class="a " style="left:15.5px;top:608px;font-size:13px;line-height:13px;font-weight:bold">Ernest Reed (25)</div>
<div class="a" style="right:18.5px;top:608px;font-size:13px;line-height:13px;">34:00</div>
<div class="bl" style="top:629px"></div>
<div class="grp" style="top:630px;height:30px"></div>
<svg class="a" style="left:5px;top:640.5px" width="6" height="8" viewBox="0 0 6 8"><path d="M0 0v8L5.3 4z" fill="#495057"/></svg>
<div class="a " style="left:15.5px;top:638px;font-size:13px;line-height:13px;font-weight:bold">Jeffrey Kelly (23)</div>
<div class="a" style="right:18.5px;top:638px;font-size:13px;line-height:13px;">38:00</div>
<div class="bl" style="top:660px"></div>
<div class="grp" style="top:661px;height:29px"></div>
<svg class="a" style="left:5px;top:671.5px" width="6" height="8" viewBox="0 0 6 8"><path d="M0 0v8L5.3 4z" fill="#495057"/></svg>
<div class="a " style="left:15.5px;top:669px;font-size:13px;line-height:13px;font-weight:bold">Jennie Fletcher (21)</div>
<div class="a" style="right:18.5px;top:669px;font-size:13px;line-height:13px;">33:00</div>
<div class="bl" style="top:690px"></div>
<div class="grp" style="top:691px;height:30px"></div>
<svg class="a" style="left:5px;top:701.5px" width="6" height="8" viewBox="0 0 6 8"><path d="M0 0v8L5.3 4z" fill="#495057"/></svg>
<div class="a " style="left:15.5px;top:699px;font-size:13px;line-height:13px;font-weight:bold">Keith Byrd (17)</div>
<div class="a" style="right:18.5px;top:699px;font-size:13px;line-height:13px;">28:00</div>
<div class="bl" style="top:721px"></div>
<div class="grp" style="top:722px;height:29px"></div>
<svg class="a" style="left:5px;top:732.5px" width="6" height="8" viewBox="0 0 6 8"><path d="M0 0v8L5.3 4z" fill="#495057"/></svg>
<div class="a " style="left:15.5px;top:730px;font-size:13px;line-height:13px;font-weight:bold">Marc Demo (23)</div>
<div class="a" style="right:18.5px;top:730px;font-size:13px;line-height:13px;">33:00</div>
<div class="bl" style="top:751px"></div>
<div class="grp" style="top:752px;height:30px"></div>
<svg class="a" style="left:5px;top:762.5px" width="6" height="8" viewBox="0 0 6 8"><path d="M0 0v8L5.3 4z" fill="#495057"/></svg>
<div class="a " style="left:15.5px;top:760px;font-size:13px;line-height:13px;font-weight:bold">Mitchell Admin (19)</div>
<div class="a" style="right:18.5px;top:760px;font-size:13px;line-height:13px;">27:00</div>
<div class="sb"></div>
<svg class="a" style="left:1354px;top:138px" width="9" height="6" viewBox="0 0 9 6"><path d="M0.5 5h8L4.5 1z" fill="#a3a3a3"/></svg>
<div class="a" style="left:1353px;top:148px;width:11px;height:417px;background:#c1c1c1"></div>
<svg class="a" style="left:1354px;top:757px" width="9" height="6" viewBox="0 0 9 6"><path d="M0.5 1h8L4.5 5z" fill="#505050"/></svg>
</body></html>
